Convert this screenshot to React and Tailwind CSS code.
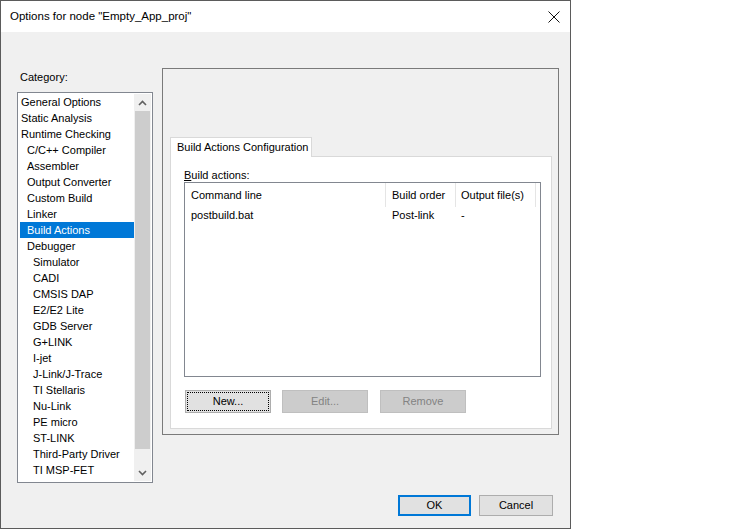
import React from 'react';

const categories = [
    ['General Options', 0],
    ['Static Analysis', 0],
    ['Runtime Checking', 0],
    ['C/C++ Compiler', 1],
    ['Assembler', 1],
    ['Output Converter', 1],
    ['Custom Build', 1],
    ['Linker', 1],
    ['Build Actions', 1],
    ['Debugger', 1],
    ['Simulator', 2],
    ['CADI', 2],
    ['CMSIS DAP', 2],
    ['E2/E2 Lite', 2],
    ['GDB Server', 2],
    ['G+LINK', 2],
    ['I-jet', 2],
    ['J-Link/J-Trace', 2],
    ['TI Stellaris', 2],
    ['Nu-Link', 2],
    ['PE micro', 2],
    ['ST-LINK', 2],
    ['Third-Party Driver', 2],
    ['TI MSP-FET', 2],
];

const indent = ['pl-[1px]', 'pl-[7px]', 'pl-[13px]'];

const Chevron = ({ up }) => (
    <svg width="9" height="6" viewBox="0 0 9 6" className="text-[#606060]">
        <path d={up ? 'M1 5 L4.5 1.5 L8 5' : 'M1 1 L4.5 4.5 L8 1'} fill="none" stroke="currentColor" strokeWidth="1.6" />
    </svg>
);

export default function App() {
    return (
        <div className="w-[750px] h-[530px] bg-white text-black text-[11px]" style={{ fontFamily: '"Liberation Sans", Arial, sans-serif' }}>
            <div className="w-[571px] h-[529px] border border-[#5b5b5b] flex flex-col bg-[#f0f0f0]">

                {/* Title bar */}
                <div className="h-[31px] bg-white flex items-center justify-between pl-[9px] pr-[10px] shrink-0">
                    <span className="text-[11.5px]">Options for node "Empty_App_proj"</span>
                    <svg width="12" height="12" viewBox="0 0 12 12">
                        <path d="M0.5 0.5 L11.5 11.5 M11.5 0.5 L0.5 11.5" stroke="#111" strokeWidth="1" />
                    </svg>
                </div>

                <div className="flex-1 flex flex-col">
                    <div className="flex items-start pl-[16px]">

                        {/* Category list */}
                        <div className="mt-[37px] flex flex-col">
                            <div className="h-[16px] leading-[16px] pl-[3px]">Category:</div>
                            <div className="mt-[7px] w-[136px] h-[391px] border border-[#828790] bg-white flex p-[1px]">
                                <div className="flex-1 pl-[1px]">
                                    {categories.map(([name, level]) => (
                                        <div
                                            key={name}
                                            className={`h-[16px] leading-[16px] whitespace-nowrap ${indent[level]} ${name === 'Build Actions' ? 'bg-[#0078d7] text-white' : ''}`}
                                        >
                                            {name}
                                        </div>
                                    ))}
                                </div>
                                <div className="w-[17px] bg-[#f0f0f0] flex flex-col">
                                    <div className="h-[17px] flex items-center justify-center">
                                        <Chevron up />
                                    </div>
                                    <div className="h-[338px] mx-[1px] bg-[#cdcdcd]" />
                                    <div className="flex-1" />
                                    <div className="h-[17px] flex items-center justify-center">
                                        <Chevron />
                                    </div>
                                </div>
                            </div>
                        </div>

                        {/* Right panel */}
                        <div className="ml-[9px] mt-[36px] w-[397px] h-[367px] border border-[#7a7a7a] pt-[68px] pl-[7px] flex flex-col">
                            <div className="w-[142px] h-[20px] border border-b-0 border-[#d9d9d9] bg-white pl-[6px] leading-[18px] relative z-10 -mb-px">
                                Build Actions Configuration
                            </div>
                            <div className="w-[382px] h-[273px] border border-[#d9d9d9] bg-white pt-[11px] pl-[13px] flex flex-col">
                                <div className="h-[14px] leading-[14px]">
                                    <span className="underline">B</span>uild actions:
                                </div>
                                <div className="w-[357px] h-[195px] border border-[#828790] bg-white">
                                    <div className="flex h-[24px] items-center">
                                        <div className="w-[201px] pl-[6px] border-r border-[#e5e5e5] h-full leading-[24px]">Command line</div>
                                        <div className="w-[70px] pl-[6px] border-r border-[#e5e5e5] h-full leading-[24px]">Build order</div>
                                        <div className="w-[80px] pl-[5px] border-r border-[#e5e5e5] h-full leading-[24px]">Output file(s)</div>
                                    </div>
                                    <div className="flex h-[16px] leading-[16px]">
                                        <div className="w-[201px] pl-[6px]">postbuild.bat</div>
                                        <div className="w-[70px] pl-[6px]">Post-link</div>
                                        <div className="w-[80px] pl-[5px]">-</div>
                                    </div>
                                </div>
                                <div className="flex mt-[13px] ml-[1px]">
                                    <div className="w-[86px] h-[23px] border border-[#adadad] bg-[#e1e1e1] p-[1px]">
                                        <div className="w-full h-full border border-dotted border-black flex items-center justify-center">New...</div>
                                    </div>
                                    <div className="w-[86px] h-[23px] ml-[11px] border border-[#bfbfbf] bg-[#cccccc] text-[#838383] flex items-center justify-center">Edit...</div>
                                    <div className="w-[86px] h-[23px] ml-[12px] border border-[#bfbfbf] bg-[#cccccc] text-[#838383] flex items-center justify-center">Remove</div>
                                </div>
                            </div>
                        </div>
                    </div>

                    {/* Dialog buttons */}
                    <div className="mt-auto flex justify-end pr-[17px] pb-[12px] gap-[8px]">
                        <div className="w-[73px] h-[21px] border-2 border-[#0078d7] bg-[#e1e1e1] flex items-center justify-center">OK</div>
                        <div className="w-[74px] h-[21px] border border-[#adadad] bg-[#e1e1e1] flex items-center justify-center">Cancel</div>
                    </div>
                </div>
            </div>
        </div>
    );
}
